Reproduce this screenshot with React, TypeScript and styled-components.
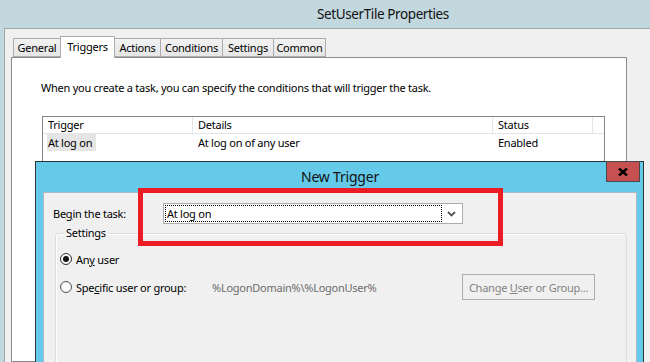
import React from 'react';
import styled, { createGlobalStyle } from 'styled-components';

const GlobalStyle = createGlobalStyle`
  html, body {
    margin: 0;
    padding: 0;
    width: 650px;
    height: 362px;
    overflow: hidden;
    font-family: 'Noto Sans', 'Open Sans', sans-serif;
    font-size: 11px;
    letter-spacing: -0.25px;
    color: #000;
  }
`;

const Window = styled.div`
  position: relative;
  width: 762px;
  height: 362px;
  display: flex;
  flex-direction: column;
  background: #c3d7de;
  padding-left: 4px;
  box-sizing: border-box;
`;

const WindowTitle = styled.div`
  height: 28px;
  display: flex;
  align-items: center;
  justify-content: center;
  font-size: 13.5px;
  letter-spacing: -0.4px;
  color: #111;
`;

const WindowBody = styled.div`
  flex: 1;
  display: flex;
  flex-direction: column;
  background: #f0f0f0;
  border-left: 1px solid #9fa9ad;
  border-top: 1px solid #9fa9ad;
  padding: 7px 0 0 6px;
  min-height: 0;
`;

const TabStrip = styled.div`
  display: flex;
  align-items: flex-end;
  height: 21px;
  padding-left: 2px;
  position: relative;
  z-index: 1;
`;

const Tab = styled.div<{ $w: number; $active?: boolean }>`
  box-sizing: border-box;
  width: ${p => p.$w}px;
  height: ${p => (p.$active ? 22 : 19)}px;
  margin-bottom: ${p => (p.$active ? -1 : 0)}px;
  border: 1px solid #acacac;
  border-bottom: ${p => (p.$active ? 'none' : '1px solid #acacac')};
  background: ${p => (p.$active ? '#fff' : 'linear-gradient(#f2f2f2, #e6e6e6)')};
  display: flex;
  align-items: ${p => (p.$active ? 'flex-start' : 'center')};
  padding-top: ${p => (p.$active ? 2 : 0)}px;
  justify-content: center;
  & + & {
    margin-left: -1px;
  }
`;

const Panel = styled.div`
  box-sizing: border-box;
  width: 616px;
  flex: 1;
  background: #fff;
  border: 1px solid #898c95;
  padding: 22px 0 0 29px;
`;

const Intro = styled.div`
  height: 16px;
  line-height: 16px;
  margin-bottom: 20px;
`;

const Table = styled.div`
  box-sizing: border-box;
  width: 563px;
  margin-left: 1px;
  height: 80px;
  border: 1px solid #828790;
  display: grid;
  grid-template-columns: 150px 300px 100px 1fr;
  grid-auto-rows: 17px;
`;

const HeadCell = styled.div<{ $last?: boolean }>`
  border-right: ${p => (p.$last ? 'none' : '1px solid #e5e5e5')};
  border-bottom: 1px solid #e5e5e5;
  padding-left: 5px;
  line-height: 16px;
`;

const Cell = styled.div`
  padding-left: 5px;
  line-height: 17px;
`;

const Selected = styled.span`
  display: inline-block;
  background: #e5e5e5;
  padding: 0 4px 0 1px;
  margin-left: -1px;
`;

const Dialog = styled.div`
  position: absolute;
  left: 35px;
  top: 161px;
  width: 609px;
  height: 230px;
  box-sizing: border-box;
  border: 1px solid #2f3336;
  background: #65c9e9;
  padding: 0 6px 0 7px;
  display: flex;
  flex-direction: column;
  z-index: 2;
`;

const DialogTitleBar = styled.div`
  height: 30px;
  display: grid;
  grid-template-columns: 1fr auto 1fr;
  align-items: start;
`;

const DialogTitle = styled.div`
  grid-column: 2;
  font-size: 14px;
  letter-spacing: -0.2px;
  line-height: 30px;
  color: #111;
`;

const CloseButton = styled.div`
  justify-self: end;
  margin-top: -1px;
  margin-right: -3px;
  width: 34px;
  height: 21px;
  box-sizing: border-box;
  background: #c75050;
  border: 1px solid #47494b;
  display: flex;
  align-items: center;
  justify-content: center;
`;

const DialogBody = styled.div`
  flex: 1;
  background: #f0f0f0;
  border: 1px solid #a9bcc6;
  padding: 10px 9px 0 9px;
`;

const BeginRow = styled.div`
  display: grid;
  grid-template-columns: 110px 300px;
  align-items: center;
  height: 21px;
`;

const Acc = styled.u`
  text-decoration-thickness: 1px;
`;

const Combo = styled.div`
  box-sizing: border-box;
  height: 21px;
  border: 1px solid #acacac;
  background: #fff;
  display: flex;
  align-items: center;
  padding: 1px;
`;

const ComboFocus = styled.div`
  flex: 1;
  height: 17px;
  box-sizing: border-box;
  border: 1px dotted #000;
  padding-left: 1px;
  line-height: 15px;
`;

const ComboArrow = styled.div`
  width: 19px;
  display: flex;
  justify-content: center;
  align-items: center;
`;

const GroupBox = styled.fieldset`
  margin: 1px 0 0 2px;
  padding: 0 0 0 4px;
  border: 1px solid #dcdcdc;
  border-radius: 3px;
  height: 140px;
  box-shadow: inset 1px 1px 0 #fff;
`;

const Legend = styled.legend`
  margin-left: 4px;
  padding: 0 2px;
  line-height: 16px;
`;

const OptionRow = styled.div<{ $h: number; $gap: number }>`
  display: grid;
  grid-template-columns: 152px 250px 133px;
  align-items: center;
  height: ${p => p.$h}px;
  margin-top: ${p => p.$gap}px;
`;

const RadioLabel = styled.div`
  display: flex;
  align-items: center;
  gap: 4px;
`;

const RadioCircle = styled.span<{ $checked?: boolean }>`
  box-sizing: border-box;
  width: 12px;
  height: 12px;
  border-radius: 50%;
  border: 1px solid ${p => (p.$checked ? '#333' : '#555')};
  background: radial-gradient(circle, #fff 40%, #eaeaea 100%);
  display: flex;
  align-items: center;
  justify-content: center;
  &::after {
    content: '';
    width: 6px;
    height: 6px;
    border-radius: 50%;
    background: ${p => (p.$checked ? '#111' : 'transparent')};
  }
`;

const GrayValue = styled.div`
  color: #6d6d6d;
`;

const DisabledButton = styled.div`
  box-sizing: border-box;
  height: 26px;
  border: 1px solid #adadad;
  background: #f0f0f0;
  color: #838383;
  display: flex;
  align-items: center;
  justify-content: center;
`;

const RedHighlight = styled.div`
  position: absolute;
  left: 138px;
  top: 188px;
  width: 365px;
  height: 58px;
  box-sizing: border-box;
  border: 5px solid #ed1c24;
  z-index: 3;
`;

const tabs = [
  { label: 'General', w: 48 },
  { label: 'Triggers', w: 55, active: true },
  { label: 'Actions', w: 47 },
  { label: 'Conditions', w: 63 },
  { label: 'Settings', w: 52 },
  { label: 'Common', w: 53 },
];

export default function App() {
  return (
    <>
      <GlobalStyle />
      <Window>
        <WindowTitle>SetUserTile Properties</WindowTitle>
        <WindowBody>
          <TabStrip>
            {tabs.map(t => (
              <Tab key={t.label} $w={t.w} $active={t.active}>
                {t.label}
              </Tab>
            ))}
          </TabStrip>
          <Panel>
            <Intro>When you create a task, you can specify the conditions that will trigger the task.</Intro>
            <Table>
              <HeadCell>Trigger</HeadCell>
              <HeadCell>Details</HeadCell>
              <HeadCell>Status</HeadCell>
              <HeadCell $last />
              <Cell>
                <Selected>At log on</Selected>
              </Cell>
              <Cell>At log on of any user</Cell>
              <Cell>Enabled</Cell>
              <Cell />
            </Table>
          </Panel>
        </WindowBody>

        <Dialog>
          <DialogTitleBar>
            <DialogTitle>New Trigger</DialogTitle>
            <CloseButton>
              <svg width="10" height="8" viewBox="0 0 10 8">
                <path d="M1 0.5 L9 7.5 M9 0.5 L1 7.5" stroke="#000" strokeWidth="2.4" />
              </svg>
            </CloseButton>
          </DialogTitleBar>
          <DialogBody>
            <BeginRow>
              <span>
                Be<Acc>g</Acc>in the task:
              </span>
              <Combo>
                <ComboFocus>At log on</ComboFocus>
                <ComboArrow>
                  <svg width="9" height="6" viewBox="0 0 9 6">
                    <path d="M1 1 L4.5 4.5 L8 1" fill="none" stroke="#555" strokeWidth="1.8" />
                  </svg>
                </ComboArrow>
              </Combo>
            </BeginRow>
            <GroupBox>
              <Legend>Settings</Legend>
              <OptionRow $h={16} $gap={10}>
                <RadioLabel>
                  <RadioCircle $checked />
                  <span>
                    An<Acc>y</Acc> user
                  </span>
                </RadioLabel>
              </OptionRow>
              <OptionRow $h={26} $gap={7}>
                <RadioLabel>
                  <RadioCircle />
                  <span>
                    Spe<Acc>c</Acc>ific user or group:
                  </span>
                </RadioLabel>
                <GrayValue>%LogonDomain%\%LogonUser%</GrayValue>
                <DisabledButton>
                  <span>
                    Change <Acc>U</Acc>ser or Group...
                  </span>
                </DisabledButton>
              </OptionRow>
            </GroupBox>
          </DialogBody>
        </Dialog>
        <RedHighlight />
      </Window>
    </>
  );
}
